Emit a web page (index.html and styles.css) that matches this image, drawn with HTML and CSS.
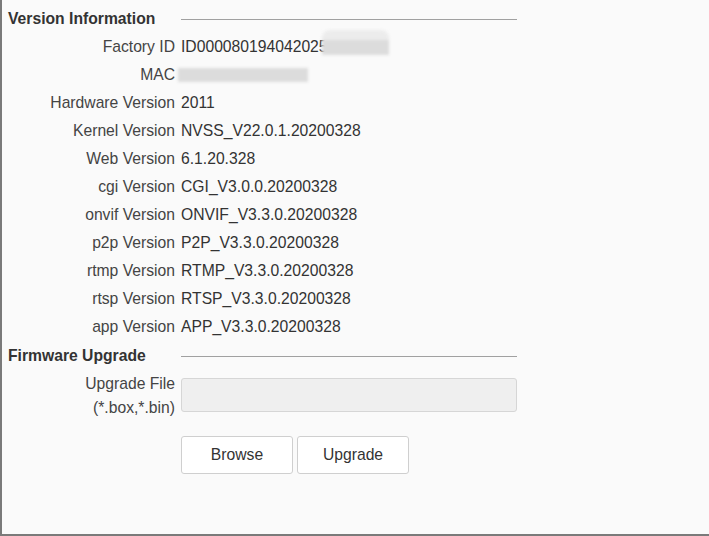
FILE: index.html
```html
<!DOCTYPE html>
<html>
<head>
<meta charset="utf-8">
<link rel="stylesheet" href="styles.css">
</head>
<body>
<div class="panel">
  <div class="section-head">
    <div class="section-title">Version Information</div>
    <div class="section-line"></div>
  </div>
  <div class="info">
    <div class="row"><div class="label">Factory ID</div><div class="value masked-wrap">ID000080194042025<span class="mask mask-id"></span></div></div>
    <div class="row"><div class="label">MAC</div><div class="value masked-wrap"><span class="mask mask-mac"></span></div></div>
    <div class="row"><div class="label">Hardware Version</div><div class="value">2011</div></div>
    <div class="row"><div class="label">Kernel Version</div><div class="value">NVSS_V22.0.1.20200328</div></div>
    <div class="row"><div class="label">Web Version</div><div class="value">6.1.20.328</div></div>
    <div class="row"><div class="label">cgi Version</div><div class="value">CGI_V3.0.0.20200328</div></div>
    <div class="row"><div class="label">onvif Version</div><div class="value">ONVIF_V3.3.0.20200328</div></div>
    <div class="row"><div class="label">p2p Version</div><div class="value">P2P_V3.3.0.20200328</div></div>
    <div class="row"><div class="label">rtmp Version</div><div class="value">RTMP_V3.3.0.20200328</div></div>
    <div class="row"><div class="label">rtsp Version</div><div class="value">RTSP_V3.3.0.20200328</div></div>
    <div class="row"><div class="label">app Version</div><div class="value">APP_V3.3.0.20200328</div></div>
  </div>
  <div class="section-head second">
    <div class="section-title">Firmware Upgrade</div>
    <div class="section-line"></div>
  </div>
  <div class="upgrade-row">
    <div class="label multi">Upgrade File<br>(*.box,*.bin)</div>
    <div class="file-box"></div>
  </div>
  <div class="buttons">
    <button class="btn">Browse</button>
    <button class="btn">Upgrade</button>
  </div>
</div>
</body>
</html>
```

FILE: styles.css
```css
html, body {
  margin: 0;
  padding: 0;
  background: #fafafa;
}
.panel {
  box-sizing: border-box;
  width: 709px;
  height: 536px;
  border-left: 2px solid #7a7a7a;
  border-bottom: 2px solid #7a7a7a;
  background: #fafafa;
  padding-top: 5px;
  font-family: "Liberation Sans", Arial, sans-serif;
  font-size: 15.7px;
  color: #333;
}
.section-head {
  display: flex;
  align-items: center;
  height: 28px;
}
.section-head.second {
  margin-top: 1px;
}
.section-title {
  width: 173px;
  padding-left: 6px;
  box-sizing: border-box;
  font-weight: bold;
  color: #333;
  white-space: nowrap;
}
.section-line {
  margin-left: 6px;
  width: 336px;
  height: 0;
  border-top: 1px solid #a0a0a0;
}
.info {
  display: flex;
  flex-direction: column;
}
.row {
  display: grid;
  grid-template-columns: 173px 1fr;
  column-gap: 6px;
  height: 28px;
  align-items: center;
  line-height: 28px;
}
.label {
  text-align: right;
  color: #444;
  white-space: nowrap;
}
.value {
  color: #333;
  white-space: nowrap;
}
.masked-wrap {
  position: relative;
  height: 28px;
}
.mask {
  position: absolute;
  filter: blur(1.5px);
}
.mask-id {
  left: 141px;
  top: -3px;
  width: 67px;
  height: 25px;
  border-radius: 8px 8px 0 0;
  background: linear-gradient(#ececec 0, #ececec 38%, #dcdcdc 40%, #dcdcdc 100%);
}
.mask-mac {
  left: -3px;
  top: 7px;
  width: 130px;
  height: 14px;
  background: #dcdcdc;
}
.upgrade-row {
  display: grid;
  grid-template-columns: 173px 336px;
  column-gap: 6px;
  align-items: start;
}
.label.multi {
  line-height: 24px;
  padding-top: 2px;
}
.file-box {
  margin-top: 8px;
  box-sizing: border-box;
  height: 34px;
  background: #efefef;
  border: 1px solid #d6d6d6;
  border-radius: 3px;
}
.buttons {
  display: flex;
  gap: 4px;
  margin-top: 16px;
  padding-left: 179px;
}
.btn {
  box-sizing: border-box;
  width: 112px;
  height: 38px;
  background: #fff;
  border: 1px solid #cfcfcf;
  border-radius: 3px;
  font-family: "Liberation Sans", Arial, sans-serif;
  font-size: 15.7px;
  color: #333;
  padding: 0;
}
```
